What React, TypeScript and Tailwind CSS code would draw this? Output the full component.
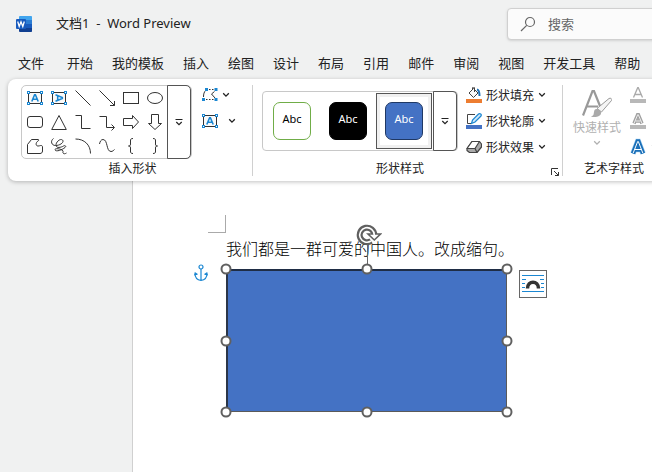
import React, { useState } from "react";

const TABS = [
  "文件",
  "开始",
  "我的模板",
  "插入",
  "绘图",
  "设计",
  "布局",
  "引用",
  "邮件",
  "审阅",
  "视图",
  "开发工具",
  "帮助",
];

const TextBoxGlyph = ({ vertical = false }: { vertical?: boolean }) => (
  <>
    <rect x="1.5" y="2.5" width="13" height="11" fill="#fafafa" stroke="#333" />
    <g
      transform={vertical ? "rotate(90 8 8)" : undefined}
      fill="none"
      stroke="#1b87d2"
      strokeWidth="1.6"
    >
      <path d="M4.800 11.500 7.600 4.700h.8l2.800 6.800M6 9.300h4" />
    </g>
    <g fill="#fff" stroke="#1b87d2">
      <rect x="0.5" y="1.5" width="2" height="2" />
      <rect x="13.5" y="1.5" width="2" height="2" />
      <rect x="0.5" y="12.5" width="2" height="2" />
      <rect x="13.5" y="12.5" width="2" height="2" />
    </g>
  </>
);

const SHAPES: { label: string; glyph: React.ReactNode }[] = [
  { label: "文本框", glyph: <TextBoxGlyph /> },
  { label: "竖排文本框", glyph: <TextBoxGlyph vertical /> },
  { label: "直线", glyph: <path d="M.5.5l15 15" /> },
  { label: "箭头", glyph: <path d="M.5.5l15 15M15.5 11v4.500H11" /> },
  { label: "矩形", glyph: <rect x=".5" y="2.500" width="15" height="11" /> },
  { label: "椭圆", glyph: <ellipse cx="8" cy="8" rx="7.5" ry="5.5" /> },
  {
    label: "圆角矩形",
    glyph: <rect x=".5" y="2.500" width="15" height="11" rx="2.500" />,
  },
  { label: "三角形", glyph: <path d="M8 1.500 15.300 15.500H.7z" /> },
  { label: "肘形连接符", glyph: <path d="M.5 1.500h6v13h9" /> },
  {
    label: "肘形箭头连接符",
    glyph: <path d="M.5 2.500h7v11h7.500M12.500 10.500l3 3-3 3" />,
  },
  {
    label: "右箭头",
    glyph: <path d="M.5 4.500h9V1.500L15.500 8 9.500 14.500v-3h-9z" />,
  },
  {
    label: "下箭头",
    glyph: <path d="M4.500.5v9h-3L8 15.500l6.500-6h-3v-9z" />,
  },
  {
    label: "任意多边形",
    glyph: (
      <path d="M.5 15.500V6.500L4.500 1.500h6.500c1 0 1 1 0 1.500C8.500 4.500 8.500 8 11 8c1.500 0 2-.500 3-.500 1 0 1.500.500 1.500 1.500v4c0 1.500-1 2.500-2.500 2.500z" />
    ),
  },
  {
    label: "自由曲线",
    glyph: (
      <path d="M2.500.500C-1 3 .500 7.500 4.500 7.500c5 0 9-3.500 7-5.500C9 0 4.500 4.500 5 7.500s5 2 7.500.500c2-1 3 .500 1.500 1.500C11 12 5 14 4 12c-.500-2 4.500-1.500 7 0 2 1.200.500 2 1 3s2 1 3.500 0" />
    ),
  },
  { label: "弧形", glyph: <path d="M.5 1c9 0 15 6 15 14.500" /> },
  {
    label: "曲线",
    glyph: <path d="M.5 6C1 3.500 2 1.500 4 1.500c5 0 3 12 8 12 1.500 0 2.500-1 3.500-2" />,
  },
  {
    label: "左大括号",
    glyph: (
      <path d="M10 .5C7.500.5 7.500 1.500 7.500 3v3c0 1.500-.5 2-2 2 1.500 0 2 .5 2 2v3c0 1.500 0 2.500 2.500 2.500" />
    ),
  },
  {
    label: "右大括号",
    glyph: (
      <path d="M6 .5c2.500 0 2.500 1 2.500 2.500v3c0 1.500.5 2 2 2-1.500 0-2 .5-2 2v3c0 1.500 0 2.500-2.500 2.500" />
    ),
  },
];

const STYLES = [
  "border-[#70ad47] bg-white text-black",
  "border-black bg-black text-white",
  "border-[#1f3864] bg-[#4472c4] text-white",
];

const Chevron = ({ className = "text-[#222]" }: { className?: string }) => (
  <svg
    viewBox="0 0 8 6"
    className={`h-[6px] w-[8px] shrink-0 ${className}`}
    fill="none"
    stroke="currentColor"
    strokeWidth="1.3"
  >
    <path d="M1.2 1.3 4 4.100l2.800-2.800" />
  </svg>
);

const MoreGlyph = () => (
  <svg
    viewBox="0 0 8 8"
    className="h-2 w-2"
    fill="none"
    stroke="#222"
    strokeWidth="1.2"
  >
    <path d="M.5 1.500h7M1.300 4 4 6.600 6.700 4" />
  </svg>
);

const WordLogo = () => (
  <svg viewBox="0 0 16 16" className="h-4 w-4">
    <path fill="#41a5ee" d="M4 0h11.200a.8.8 0 0 1 .8.8V4H3V1a1 1 0 0 1 1-1z" />
    <path fill="#2b7cd3" d="M3 4h13v4H3z" />
    <path fill="#185abd" d="M3 8h13v4H3z" />
    <path fill="#103f91" d="M3 12h13v3.200a.8.8 0 0 1-.8.8H4a1 1 0 0 1-1-1z" />
    <rect y="3" width="10" height="10" rx="1" fill="#185abd" />
    <path
      fill="none"
      stroke="#fff"
      strokeWidth="1.300"
      d="M1.700 5.500 3.200 10.500 5 5.800l1.800 4.700 1.500-5"
    />
  </svg>
);

const FillIcon = () => (
  <svg viewBox="0 0 16 16" className="h-4 w-4 shrink-0" fill="none">
    <path d="M3 6 7.500 1.500 12 6 7.500 10.500z" fill="#fafafa" stroke="#444" />
    <path d="M8.500 5V1c0-1.300-2-1.300-2 0v2" stroke="#444" />
    <path d="M11 2.500c2 .5 2.500 2 2.500 6.500" stroke="#1b6fb5" strokeWidth="2" />
    <path d="M0 12h16v4H0z" fill="#ed7d31" />
  </svg>
);

const OutlineIcon = () => (
  <svg viewBox="0 0 16 16" className="h-4 w-4 shrink-0" fill="none">
    <path d="M9 1.500H1.500v9H5" stroke="#444" />
    <path
      d="M5.500 10.500 6.500 7 12.500 1c1.500-1 3.500.5 2.500 2L9 9z"
      fill="#cfe6f8"
      stroke="#1b87d2"
      strokeWidth="1.200"
    />
    <path d="M0 12h16v4H0z" fill="#4472c4" />
  </svg>
);

const EffectsIcon = () => (
  <svg
    viewBox="0 0 16 16"
    className="h-4 w-4 shrink-0"
    stroke="#444"
    strokeWidth="1.200"
    strokeLinejoin="round"
  >
    <path d="M6 2.500h7.500L15.500 5v3l-4.500 5.500H3.500L1 11.500v-2z" fill="#aaa" />
    <path d="M6 2.500h7.500L9 9.500H1z" fill="#fff" />
    <path d="M1 9.500h8l2 4" fill="none" />
  </svg>
);

const COMMANDS = [
  { label: "形状填充", icon: <FillIcon /> },
  { label: "形状轮廓", icon: <OutlineIcon /> },
  { label: "形状效果", icon: <EffectsIcon /> },
];

const GroupLabel = ({ children }: { children: React.ReactNode }) => (
  <div className="text-center text-[12px] leading-4 text-[#222]">{children}</div>
);

const InsertShapesGroup = () => (
  <section className="flex w-[245px] shrink-0 flex-col justify-between border-r border-[#d0d0d0] pl-[13px]">
    <div className="flex gap-[10px]">
      <div className="flex h-[74px] w-[171px] rounded-[5px] border border-[#c8c8c8]">
        <div className="grid grid-cols-[repeat(6,24px)] pl-px">
          {SHAPES.map((s) => (
            <button
              key={s.label}
              aria-label={s.label}
              className="flex h-6 items-center justify-center"
            >
              <svg
                viewBox="0 0 16 16"
                className="h-4 w-4 overflow-visible"
                fill="none"
                stroke="#333"
              >
                {s.glyph}
              </svg>
            </button>
          ))}
        </div>
        <button
          aria-label="更多形状"
          className="-my-px ml-auto flex w-6 shrink-0 items-center justify-center rounded-r-[5px] border border-[#555]"
        >
          <MoreGlyph />
        </button>
      </div>
      <div className="flex flex-col gap-[10px] pt-[2px]">
        <button aria-label="编辑形状" className="flex items-center gap-1">
          <svg viewBox="0 0 16 16" className="h-4 w-4" fill="none">
            <path
              d="M7 2.500h1.500M10 2.500h1.500M1.500 10c0-3 .500-5 2.500-7M4 12.500h1.500M7 12.500h1.500M10 12.500h1.500M12.500 4.500 9.500 7l3.500 4"
              stroke="#333"
            />
            <path
              d="M3 1h3v3H3zM12.500 1h3v3h-3zM0 11h3v3H0zM12.500 11h3v3h-3z"
              fill="#1b87d2"
            />
          </svg>
          <Chevron />
        </button>
        <button aria-label="绘制文本框" className="flex items-center gap-[10px]">
          <svg viewBox="0 0 16 16" className="h-4 w-4">
            <TextBoxGlyph />
          </svg>
          <Chevron />
        </button>
      </div>
    </div>
    <div className="pr-2">
      <GroupLabel>插入形状</GroupLabel>
    </div>
  </section>
);

const ShapeStylesGroup = () => {
  const [selected, setSelected] = useState(2);

  return (
    <section className="flex w-[310px] shrink-0 flex-col justify-between border-r border-[#d0d0d0] pl-[9px]">
      <div className="flex gap-2">
        <div className="mt-[6px] flex h-[60px] w-[196px] rounded-[4px] border border-[#c8c8c8]">
          <div className="flex flex-1 items-center pl-px">
            {STYLES.map((style, i) => (
              <button
                key={style}
                onClick={() => setSelected(i)}
                className={`flex h-[56px] w-[56px] shrink-0 items-center justify-center border ${
                  i === selected
                    ? "border-[#555] ring-3 ring-[#f0f0f0] ring-inset"
                    : "border-transparent"
                }`}
              >
                <span
                  className={`flex h-[38px] w-[38px] items-center justify-center rounded-[7px] border pb-1 font-['Noto_Sans'] text-[11px] ${style}`}
                >
                  Abc
                </span>
              </button>
            ))}
          </div>
          <button
            aria-label="更多样式"
            className="-my-px flex w-6 shrink-0 items-center justify-center rounded-r-[4px] border border-[#555]"
          >
            <MoreGlyph />
          </button>
        </div>
        <div className="flex flex-col gap-[10px] pt-[2px]">
          {COMMANDS.map((c) => (
            <button
              key={c.label}
              className="flex h-4 items-center text-[12px] leading-4 text-[#222]"
            >
              {c.icon}
              <span className="mr-1 ml-1">{c.label}</span>
              <Chevron />
            </button>
          ))}
        </div>
      </div>
      <div className="relative pr-6">
        <GroupLabel>形状样式</GroupLabel>
        <button aria-label="设置形状格式" className="absolute right-[3px] bottom-0">
          <svg viewBox="0 0 8 8" className="h-2 w-2" fill="none" stroke="#333">
            <path d="M.5 7V.5H7M3 3l4.500 4.500M7.500 4v3.500H4" />
          </svg>
        </button>
      </div>
    </section>
  );
};

const WordArtGroup = () => (
  <section className="flex w-[92px] shrink-0 flex-col justify-between pl-[10px]">
    <div className="flex gap-[9px]">
      <button
        disabled
        className="flex shrink-0 flex-col items-center pt-1 text-[12px] leading-4 text-[#b0b0b0]"
      >
        <svg viewBox="0 0 30 30" className="h-[30px] w-[30px]" fill="none">
          <path
            d="M1 26.500 10.500 2h1.500l6 15M5 17.500h11"
            stroke="#999"
            strokeWidth="2.200"
          />
          <path
            d="M15 19.500 27 9.500c1.500-1 3.500.5 2.500 2L19.500 23z"
            fill="#f5f5f5"
            stroke="#999"
          />
          <path
            d="M14.500 20c2.500 0 5 2 4.500 4.500-.5 3-5.500 4.500-10 3 3-1 2.500-2 3-4.500.2-2 1-3 2.500-3z"
            fill="#aaa"
          />
        </svg>
        <span>快速样式</span>
        <span className="flex h-4 items-center">
          <Chevron className="text-[#b0b0b0]" />
        </span>
      </button>
      <div className="flex flex-col gap-[10px] pt-[2px]">
        <button disabled aria-label="文本填充">
          <svg viewBox="0 0 16 16" className="h-4 w-4" fill="none">
            <path
              d="M3.500 10.500 7.700.700h.600l4.200 9.800M5 7.500h6"
              stroke="#aaa"
              strokeWidth="1.300"
            />
            <path d="M0 12h16v4H0z" fill="#b8b8b8" />
          </svg>
        </button>
        <button disabled aria-label="文本轮廓">
          <svg viewBox="0 0 16 16" className="h-4 w-4" fill="none">
            <path
              d="M4 10.500 7.700 1.500h.600l3.700 9M5.500 8h5"
              stroke="#a0a0a0"
              strokeWidth="3.400"
            />
            <path d="M4 10.500 7.700 1.700h.600l3.700 8.800M5.500 8h5" stroke="#eee" />
            <path d="M0 12h16v4H0z" fill="#b8b8b8" />
          </svg>
        </button>
        <button aria-label="文本效果" className="flex items-center gap-[5px]">
          <svg
            viewBox="0 0 16 16"
            className="h-4 w-4 shrink-0 overflow-visible"
            fill="none"
          >
            <path
              d="M3 14.500 7.600 2.500h.800L13 14.500M5 10.500h6"
              stroke="#a8d3f2"
              strokeWidth="5.600"
            />
            <path
              d="M3 14.500 7.600 2.500h.800L13 14.500M5 10.500h6"
              stroke="#1a6fb8"
              strokeWidth="4.400"
            />
            <path
              d="M3.200 14 7.700 2.500h.600L12.800 14M5 10.500h6"
              stroke="#fff"
            />
          </svg>
          <Chevron />
        </button>
      </div>
    </div>
    <GroupLabel>艺术字样式</GroupLabel>
  </section>
);

// eight resize handles, centred on the shape's border
const HANDLES = [
  "top-0 left-0",
  "top-0 left-1/2",
  "top-0 left-full",
  "top-1/2 left-0",
  "top-1/2 left-full",
  "top-full left-0",
  "top-full left-1/2",
  "top-full left-full",
];

const SelectedShape = () => (
  <div className="relative h-[143px] w-[281px]">
    <div className="h-full w-full border border-t-2 border-l-2 border-[#5a5a5a] border-t-[#1f2d45] border-l-[#2b3648] bg-[#4472c4]" />
    <div className="absolute -top-[28px] left-1/2 h-[24px] w-px bg-[#666]" />
    <svg
      viewBox="0 0 26 22"
      className="absolute -top-[45px] left-[130px] h-[22px] w-[26px]"
      fill="none"
    >
      <path
        d="M18.300 11a7.300 7.300 0 1 0-3.200 6"
        stroke="#606060"
        strokeWidth="6"
      />
      <path
        d="M12 10H24.500L18.300 16z"
        fill="#fff"
        stroke="#606060"
        strokeWidth="1.600"
      />
      <path d="M18.300 11a7.300 7.300 0 1 0-3.200 6" stroke="#fff" strokeWidth="1.600" />
    </svg>
    {HANDLES.map((pos) => (
      <span
        key={pos}
        className={`absolute h-[11px] w-[11px] -translate-x-1/2 -translate-y-1/2 rounded-full border-2 border-[#606060] bg-white ${pos}`}
      />
    ))}
    <svg
      viewBox="0 0 14 18"
      className="absolute -top-[5px] -left-[32px] h-[18px] w-[14px]"
      fill="none"
      stroke="#1b87d2"
      strokeWidth="1.200"
    >
      <circle cx="7" cy="3" r="2" />
      <path d="M7 5v11.500M1 9.500c0 4 2.500 6.500 6 7 3.500-.5 6-3 6-7M.5 11.500l.7-2.500 2.300 1.500M13.500 11.500 12.800 9l-2.300 1.500" />
    </svg>
    <button
      aria-label="布局选项"
      className="absolute top-[1px] left-[293px] flex h-[28px] w-[28px] items-center justify-center border border-[#666] bg-white"
    >
      <svg viewBox="0 0 24 24" className="h-6 w-6" fill="none">
        <path
          d="M1 3.500h22M1 7.500h4M19 7.500h4M1 11.500h3M20 11.500h3M1 15.500h3M20 15.500h3M1 19.500h22"
          stroke="#1b87d2"
        />
        <path d="M6.500 16.500c0-8.500 11-8.500 11 0" stroke="#333" strokeWidth="3.500" />
      </svg>
    </button>
  </div>
);

const App: React.FC = () => {
  const [query, setQuery] = useState("");

  return (
    <div className="flex min-h-screen flex-col overflow-hidden bg-[#f0f1f1] font-['Noto_Sans_CJK_SC',sans-serif] text-[#222]">
      <header className="flex h-12 items-center pl-4">
        <WordLogo />
        <h1 className="ml-6 w-[451px] shrink-0 font-['Noto_Sans','Noto_Sans_CJK_SC',sans-serif] text-[13px] whitespace-pre">
          文档1  -  Word Preview
        </h1>
        <label className="-mr-2 flex h-8 flex-1 items-center gap-3 rounded-[4px] border border-[#d0d0d0] bg-[#fbfbfb] pl-3 shadow-sm">
          <svg
            viewBox="0 0 16 16"
            className="h-4 w-4 shrink-0"
            fill="none"
            stroke="#666"
            strokeWidth="1.200"
          >
            <circle cx="10" cy="6" r="4.500" />
            <path d="M6.700 9.300 1 15" />
          </svg>
          <input
            type="text"
            aria-label="搜索"
            placeholder="搜索"
            value={query}
            onChange={(e) => setQuery(e.target.value)}
            className="w-full min-w-0 bg-transparent text-[13px] outline-none placeholder:text-[#666]"
          />
        </label>
      </header>

      <nav className="flex h-[31px] items-center gap-[19px] pb-[2px] pl-[18px] text-[13px] whitespace-nowrap">
        {TABS.map((tab) => (
          <button key={tab} className="shrink-0 first:mr-1">
            {tab}
          </button>
        ))}
      </nav>

      <div className="relative -mr-2 ml-2 flex rounded-lg bg-white pt-[6px] pb-[5px] shadow-[0_1px_4px_rgba(0,0,0,0.25)]">
        <div className="flex h-[91px]">
          <InsertShapesGroup />
          <ShapeStylesGroup />
          <WordArtGroup />
        </div>
      </div>

      <main className="ml-[132px] flex-1 border-l border-[#d0d0d0] bg-white pt-[34px] pl-[75px]">
        <div className="h-[18px] w-[18px] border-r border-b border-[#aaa]" />
        <div className="pl-[18px]">
          <p className="mt-[3px] mb-[9px] text-[16px] leading-6 font-light whitespace-nowrap text-black">
            我们都是一群可爱的中国人。改成缩句。
          </p>
          <SelectedShape />
        </div>
      </main>
    </div>
  );
};

export default App;
